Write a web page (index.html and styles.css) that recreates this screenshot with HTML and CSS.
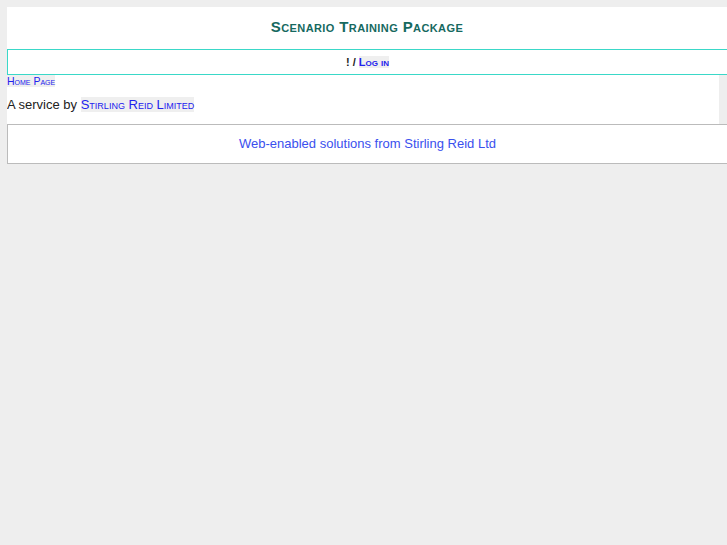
FILE: index.html
```html
<!DOCTYPE html>
<html lang="en">

<head>
    <meta charset="UTF-8">
    <title>Scenario Training Package</title>
    <link rel="stylesheet" href="styles.css">
</head>

<body>
    <div class="header">
        <h1>Scenario Training Package</h1>
    </div>
    <div class="nav">
        ! / <a href="#">Log in</a>
    </div>
    <div class="content">
        <div class="crumbs"><a href="#">Home Page</a></div>
        <p>A service by <a href="#">Stirling Reid Limited</a></p>
    </div>
    <div class="footer">
        Web-enabled solutions from Stirling Reid Ltd
    </div>
</body>

</html>
```

FILE: styles.css
```css
body {
    margin: 7px 0 0 7px;
    background-color: #eee;
    font-family: "Liberation Sans", Arial, sans-serif;
    font-size: 13px;
    color: #222;
}

a {
    color: #2222ee;
    background-color: #efefef;
    text-decoration: none;
    font-variant: small-caps;
}

.header {
    box-sizing: border-box;
    background: white;
    height: 42px;
    padding-bottom: 4px;
    display: flex;
    align-items: center;
    justify-content: center;
}

h1 {
    margin: 0;
    font-size: 15px;
    letter-spacing: 0.4px;
    font-variant: small-caps;
    color: #16695f;
}

.nav {
    background: white;
    border: 1px solid #3ad8c8;
    border-right: none;
    height: 24px;
    line-height: 24px;
    text-align: center;
    font-size: 11px;
    font-weight: bold;
}

.content {
    background: white;
    margin-right: 8px;
    height: 49px;
}

.crumbs {
    font-size: 10.5px;
    line-height: 12px;
}

.content p {
    margin: 10px 0 0;
    line-height: 15px;
}

.footer {
    background: white;
    border: 1px solid #bbb;
    border-right: none;
    height: 38px;
    line-height: 38px;
    text-align: center;
    color: #3a50ee;
}
```
